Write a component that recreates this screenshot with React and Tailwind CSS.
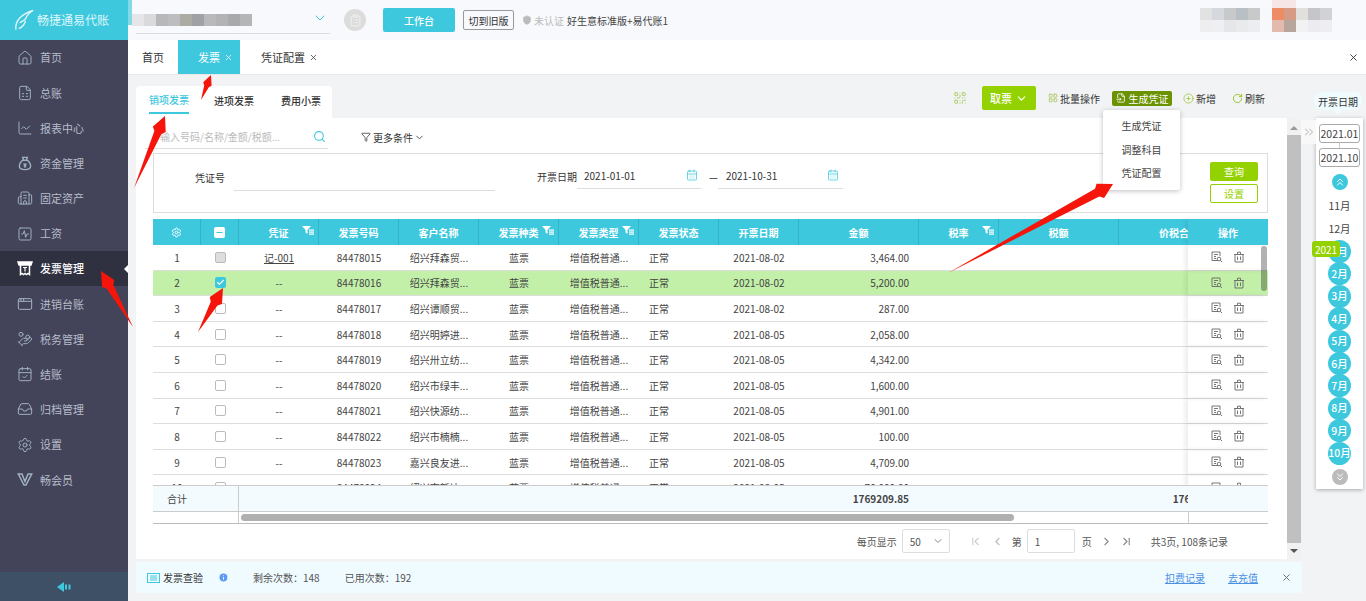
import React from "react";
import {
  House, FileSpreadsheet, ChartLine, Building2, SquareActivity, AppWindow, HandCoins, CalendarCheck,
  Inbox, Settings, ChevronDown, ChevronLeft, ChevronRight, ChevronsUp, ChevronsDown, ChevronsRight,
  ChevronFirst, ChevronLast, X, Search, Funnel, CalendarDays, QrCode, LayoutGrid, CirclePlus, RotateCw,
  Shield, Check, Minus, ClipboardList, FileInput, Info,
} from "lucide-react";

const MoneyBag = (props) => (
  <svg width="15" height="15" viewBox="0 0 16 16" fill="none" stroke="currentColor" strokeWidth="1.2" {...props}>
    <path d="M5.5 1.5h5L9.5 4.5h-3zM6 4.5C3.5 6 2 8.5 2 11c0 2.5 2 3.5 6 3.5s6-1 6-3.5c0-2.5-1.500-5-4-6.500"/>
    <path d="M6.500 8l1.500 1.500L9.500 8M8 9.500V12.500M6.500 10.500h3"/>
  </svg>
);

const InvoiceIcon = (props) => (
  <svg width="16" height="15" viewBox="0 0 16 15" fill="none" stroke="currentColor" strokeWidth="1.500" {...props}>
    <path d="M1 1h14l-1 3H2z" fill="currentColor"/>
    <path d="M3.500 4v9.500l1.500-1 1.500 1 1.500-1 1.500 1 1.500-1 1.500 1V4"/>
    <path d="M6 6.500h4M8 6.500v4" strokeWidth="1.200"/>
  </svg>
);

const VipIcon = (props) => (
  <svg width="15" height="13" viewBox="0 0 15 13" fill="none" stroke="currentColor" strokeWidth="1.300" {...props}>
    <path d="M0.800 1h3.700l3 7.500L10.500 1h3.700L8.500 12h-2z"/>
  </svg>
);

const navItems = [
  {label: "首页", icon: House},
  {label: "总账", icon: FileSpreadsheet},
  {label: "报表中心", icon: ChartLine},
  {label: "资金管理", icon: MoneyBag},
  {label: "固定资产", icon: Building2},
  {label: "工资", icon: SquareActivity},
  {label: "发票管理", icon: InvoiceIcon, active: true},
  {label: "进销台账", icon: AppWindow},
  {label: "税务管理", icon: HandCoins},
  {label: "结账", icon: CalendarCheck},
  {label: "归档管理", icon: Inbox},
  {label: "设置", icon: Settings},
  {label: "畅会员", icon: VipIcon},
];

const rows = [
  {no: 1, voucher: "记-001", code: "84478015", name: "绍兴拜森贸...", date: "2021-08-02", amount: "3,464.00"},
  {no: 2, voucher: "--", code: "84478016", name: "绍兴拜森贸...", date: "2021-08-02", amount: "5,200.00", checked: true},
  {no: 3, voucher: "--", code: "84478017", name: "绍兴谭顺贸...", date: "2021-08-02", amount: "287.00"},
  {no: 4, voucher: "--", code: "84478018", name: "绍兴明婷进...", date: "2021-08-05", amount: "2,058.00"},
  {no: 5, voucher: "--", code: "84478019", name: "绍兴卅立纺...", date: "2021-08-05", amount: "4,342.00"},
  {no: 6, voucher: "--", code: "84478020", name: "绍兴市绿丰...", date: "2021-08-05", amount: "1,600.00"},
  {no: 7, voucher: "--", code: "84478021", name: "绍兴快源纺...", date: "2021-08-05", amount: "4,901.00"},
  {no: 8, voucher: "--", code: "84478022", name: "绍兴市楠楠...", date: "2021-08-05", amount: "100.00"},
  {no: 9, voucher: "--", code: "84478023", name: "嘉兴良友进...", date: "2021-08-05", amount: "4,709.00"},
  {no: 10, voucher: "--", code: "84478024", name: "绍兴市新达...", date: "2021-08-05", amount: "70,000.00"},
];

const months = ["1月", "2月", "3月", "4月", "5月", "6月", "7月", "8月", "9月", "10月"];

const gridCols = "grid grid-cols-[48px_38px_80px_80px_80px_80px_80px_80px_80px_120px_80px_120px_69px_80px]";

const arrows = [
  [201, 100, 211, 75, 4.5],
  [134, 188, 165, 116, 7],
  [133, 327, 101, 271, 7],
  [198, 332, 223, 288, 7],
  [948, 273, 1113, 184, 8],
];

// mosaic over the private names in the screenshot
const companyTiles = ["#e6e6e8", "#dadadc", "#b8b8ba", "#bdbcbe", "#acaca5", "#9fa1a4", "#b9b9bc", "#b2b3b2", "#a8a9ab", "#b4b5b6"];
const userTilesTop = ["#e2e2e2", "#d5d8dc", "#c8c9cb", "#b8bfc5", "#c8caca", "#f7f8fc", "#ec8d66", "#d69b85", "#e2e0dc", "#c5c5ca", "#d0d2d6"];
const userTilesBottom = ["#eeeef0", "#eeeff3", "#e6e6e8", "#e8eaec", "#ecedf1", "#f7f8fc", "#e2baae", "#b8a69e", "#f2f2f2", "#ecebf0", "#eeeef0"];

const arrowPoints = ([x1, y1, x2, y2, w]) => {
  const len = Math.hypot(x2 - x1, y2 - y1);
  const ux = (x2 - x1) / len;
  const uy = (y2 - y1) / len;
  const head = Math.min(18, len * 0.45);
  const bx = x2 - ux * head;
  const by = y2 - uy * head;
  const nx = x2 - ux * head * 0.8;
  const ny = y2 - uy * head * 0.8;
  return [
    [x1, y1],
    [bx - uy * w * 0.55, by + ux * w * 0.55],
    [nx - uy * w, ny + ux * w],
    [x2, y2],
    [nx + uy * w, ny - ux * w],
    [bx + uy * w * 0.55, by - ux * w * 0.55],
  ].map((p) => p.join(",")).join(" ");
};

const FilterMark = () => (
  <svg width="12" height="10" viewBox="0 0 12 10" fill="white" className="absolute right-[4px] top-[7px]">
    <path d="M0 0h9L5.500 4v4L3.500 6.500V4z"/>
    <rect x="7" y="3.500" width="5" height="1.200"/>
    <rect x="7" y="5.500" width="5" height="1.200"/>
    <rect x="7" y="7.500" width="5" height="1.200"/>
  </svg>
);

const ViewIcon = () => (
  <svg width="12" height="12" viewBox="0 0 12 12" fill="none" stroke="currentColor" strokeWidth="0.900">
    <path d="M7 9.500H1V1h8v4"/>
    <path d="M3 3.500h4M3 5.500h2M3 7.500h2"/>
    <circle cx="8" cy="8" r="1.800"/>
    <path d="M9.300 9.300L11 11"/>
  </svg>
);

const BinIcon = () => (
  <svg width="12" height="12" viewBox="0 0 12 12" fill="none" stroke="currentColor" strokeWidth="0.900">
    <path d="M1 3.500h10M4.500 3.500V1.200h3v2.300M2 3.500V11h8V3.500M4.500 5.500v3.500M7.500 5.500v3.500"/>
  </svg>
);

const HeaderCell = ({children, filter}) => (
  <div className="relative flex h-full items-center justify-center border-r border-[#35b3c8] font-bold">
    {children}
    {filter && <FilterMark/>}
  </div>
);

const Sidebar = () => (
  <aside className="flex h-full w-[128px] shrink-0 flex-col bg-[#43435a]">
    <div className="relative flex h-[40px] shrink-0 items-center gap-[2px] bg-[#3ec8de] pl-[14px] text-[12px] text-[#dff6fa]">
      <svg width="21" height="24" viewBox="0 0 22 24" fill="none" stroke="#e8f8fb" strokeWidth="1.400">
        <path d="M2 22C1 13 8 6 20 2C15 5 13 8 12 11C10 13 7 14 6 15"/>
        <path d="M5 21C8 20 11 17 12 13"/>
      </svg>
      <span className="whitespace-nowrap">畅捷通易代账</span>
      <div className="absolute -right-[4px] top-0 h-[25px] w-[4px] bg-[#84d9e7]"/>
    </div>
    <nav className="flex-1">
      {navItems.map((item) => (
        <div
          key={item.label}
          className={
            item.active
              ? "relative flex h-[35.2px] items-center gap-[7px] bg-[#2f3040] pl-[17px] text-[11px] font-medium text-white"
              : "flex h-[35.2px] items-center gap-[7px] pl-[17px] text-[11px] text-[#b6bdc9]"
          }
        >
          <item.icon size={16} strokeWidth={1.5} className={item.active ? "w-[16px] text-white" : "w-[16px] text-[#9fb2c0]"}/>
          <span>{item.label}</span>
          {item.active && (
            <span className="absolute right-0 top-[14px] h-0 w-0 border-y-[4px] border-r-[4px] border-y-transparent border-r-white"/>
          )}
        </div>
      ))}
    </nav>
    <div className="flex h-[29px] shrink-0 items-center justify-center bg-[#3e5066]">
      <svg width="14" height="10" viewBox="0 0 14 10" fill="#3ec8de">
        <path d="M0 5L7 0V10Z"/>
        <rect x="8" y="2.500" width="2" height="5"/>
        <rect x="11.500" y="2.500" width="2" height="5"/>
      </svg>
    </div>
  </aside>
);

const TopBar = () => (
  <header className="flex h-[40px] shrink-0 items-center bg-[#f8f9fd] text-[10px]">
    <div className="relative flex h-full w-[202px] shrink-0 items-center pl-[4px]">
      <div className="flex">
        {companyTiles.map((c, i) => (
          <div key={i} className="h-[12px] w-[12px]" style={{backgroundColor: c}}/>
        ))}
      </div>
      <ChevronDown size={16} strokeWidth={1.5} className="absolute left-[184px] top-[10px] text-[#3ec8de]"/>
      <div className="absolute bottom-[6px] left-[8px] h-px w-[194px] bg-[#dddddd]"/>
    </div>
    <div className="ml-[14px] flex h-[22px] w-[22px] items-center justify-center rounded-full bg-[#dcdcdc]">
      <ClipboardList size={13} strokeWidth={1.5} className="text-[#f5f5f5]"/>
    </div>
    <button className="ml-[17px] h-[24px] w-[72px] rounded-[2px] bg-[#3ec8de] text-[10px] font-medium text-white">工作台</button>
    <button className="ml-[8px] h-[20px] w-[51px] rounded-[2px] border border-[#999] text-[10px] text-[#333]">切到旧版</button>
    <Shield size={10} fill="#bbbbbb" className="ml-[8px] text-[#bbbbbb]"/>
    <span className="ml-[2px] text-[#bbbbbb]">未认证</span>
    <span className="ml-[3px] text-[#444]">好生意标准版+易代账1</span>
    <div className="relative ml-auto mr-[34px] flex w-[132px] flex-col">
      {[userTilesTop, userTilesBottom].map((line, n) => (
        <div key={n} className="flex">
          {line.map((c, i) => (
            <div key={i} className="h-[12px] w-[12px]" style={{backgroundColor: c}}/>
          ))}
        </div>
      ))}
      <div className="absolute -top-[12px] left-[72px] h-[12px] w-[24px] bg-[#f7e6e6]"/>
    </div>
  </header>
);

const TabBar = () => (
  <div className="flex h-[35px] shrink-0 items-stretch border-b border-[#e8e8e8] bg-white text-[11px] text-[#333]">
    <div className="flex w-[50px] items-center pl-[14px]">首页</div>
    <div className="flex w-[62px] items-center gap-[4px] bg-[#3ec8de] pl-[20px] text-white">
      发票 <X size={9}/>
    </div>
    <div className="flex items-center gap-[4px] pl-[21px]">
      凭证配置 <X size={9}/>
    </div>
    <div className="ml-auto flex w-[26px] items-center justify-center">
      <X size={11} className="text-[#333]"/>
    </div>
  </div>
);

const Toolbar = () => (
  <div className="flex h-[32px] shrink-0 items-start">
    <div className="flex h-full w-[196px] items-stretch rounded-t-[4px] bg-white pl-[13px] text-[10px] font-medium whitespace-nowrap text-[#333]">
      <div className="mr-[25px] flex h-[28px] w-[40px] items-center justify-center border-b-2 border-[#3ec8de] text-[#3ec8de]">销项发票</div>
      <div className="mr-[27px] flex h-[28px] items-center">进项发票</div>
      <div className="flex h-[28px] items-center">费用小票</div>
    </div>
    <div className="ml-auto mr-[101px] flex h-[24px] items-center text-[10px] whitespace-nowrap text-[#333]">
      <QrCode size={14} strokeWidth={1.5} className="text-[#a6c85a]"/>
      <button className="ml-[15px] flex h-[24px] w-[54px] items-center justify-center gap-[3px] rounded-[2px] bg-[#94d100] text-[11px] font-medium text-white">
        取票 <ChevronDown size={13}/>
      </button>
      <LayoutGrid size={10} className="ml-[12px] text-[#a6c85a]"/>
      <span className="ml-[2px]">批量操作</span>
      <div className="ml-[12px] flex h-[15px] w-[60px] items-center justify-center gap-[3px] rounded-[2px] bg-[#6b9200] text-white">
        <FileInput size={10}/> 生成凭证
      </div>
      <CirclePlus size={11} strokeWidth={1.5} className="ml-[11px] text-[#94c21e]"/>
      <span className="ml-[2px]">新增</span>
      <RotateCw size={11} className="ml-[16px] text-[#94c21e]"/>
      <span className="ml-[2px]">刷新</span>
    </div>
  </div>
);

const SearchRow = () => (
  <div className="mt-[7px] -ml-[8px] flex h-[24px] items-center">
    <div className="flex h-[24px] w-[183px] items-center justify-between border-b border-[#dddddd] pl-[15px] pr-[2px] text-[10px] text-[#bbbbbb]">
      <span className="whitespace-nowrap">输入号码/名称/金额/税额...</span>
      <Search size={13} className="text-[#3ec8de]"/>
    </div>
    <Funnel size={10} className="ml-[33px] text-[#444]"/>
    <span className="ml-[2px] text-[10px] text-[#333]">更多条件</span>
    <ChevronDown size={11} className="ml-[1px] text-[#444]"/>
  </div>
);

const FilterBox = () => (
  <div className="mt-[4px] flex h-[60px] items-start border border-[#dddddd] text-[10px] text-[#333]">
    <span className="ml-[41px] mt-[16px]">凭证号</span>
    <div className="ml-[9px] mt-[36px] h-px w-[261px] bg-[#dddddd]"/>
    <span className="ml-[42px] mt-[15px]">开票日期</span>
    <div className="mt-[8px] flex h-[27px] w-[124px] items-center justify-between border-b border-[#dddddd] pl-[7px] pr-[3px]">
      2021-01-01
      <CalendarDays size={12} strokeWidth={1.5} className="text-[#3ec8de]"/>
    </div>
    <span className="ml-[8px] mt-[15px]">—</span>
    <div className="mt-[8px] flex h-[27px] w-[125px] items-center justify-between border-b border-[#dddddd] pl-[8px] pr-[4px]">
      2021-10-31
      <CalendarDays size={12} strokeWidth={1.5} className="text-[#3ec8de]"/>
    </div>
    <div className="ml-auto mr-[9px] mt-[8px] flex w-[48px] flex-col gap-[3px]">
      <button className="h-[19px] rounded-[2px] bg-[#94d100] text-white">查询</button>
      <button className="h-[19px] rounded-[2px] border border-[#94d100] text-[#94d100]">设置</button>
    </div>
  </div>
);

const InvoiceTable = () => (
  <div className="relative mt-[6px] text-[10px] text-[#444]">
    <div className={`${gridCols} h-[26px] bg-[#3ec8de] text-[10px] text-white`}>
      <HeaderCell><Settings size={11}/></HeaderCell>
      <HeaderCell>
        <span className="flex h-[11px] w-[11px] items-center justify-center rounded-[2px] bg-white">
          <Minus size={9} strokeWidth={3} className="text-[#3ec8de]"/>
        </span>
      </HeaderCell>
      <HeaderCell filter>凭证</HeaderCell>
      <HeaderCell>发票号码</HeaderCell>
      <HeaderCell>客户名称</HeaderCell>
      <HeaderCell filter>发票种类</HeaderCell>
      <HeaderCell filter>发票类型</HeaderCell>
      <HeaderCell>发票状态</HeaderCell>
      <HeaderCell>开票日期</HeaderCell>
      <HeaderCell>金额</HeaderCell>
      <HeaderCell filter>税率</HeaderCell>
      <HeaderCell>税额</HeaderCell>
      <div className="flex h-full items-center overflow-hidden font-bold">
        <span className="w-[120px] shrink-0 text-center">价税合计</span>
      </div>
      <div className="flex h-full items-center justify-center font-bold shadow-[-3px_0_5px_rgba(0,0,0,0.08)]">操作</div>
    </div>

    <div className="h-[240px] overflow-hidden">
      {rows.map((row) => (
        <div
          key={row.no}
          className={`${gridCols} h-[25.6px] items-center border-b border-[#dddddd] ${row.checked ? "bg-[#c2f0a8]" : "bg-white"}`}
        >
          <div className="text-center">{row.no}</div>
          <div className="flex justify-center">
            {row.checked ? (
              <span className="flex h-[11px] w-[11px] items-center justify-center rounded-[2px] bg-[#3ec8de]">
                <Check size={9} strokeWidth={3} className="text-white"/>
              </span>
            ) : (
              <span className={`h-[11px] w-[11px] rounded-[2px] border border-[#bbbbbb] ${row.no === 1 ? "bg-[#dddddd]" : "bg-white"}`}/>
            )}
          </div>
          <div className={`text-center ${row.no === 1 ? "underline" : ""}`}>{row.voucher}</div>
          <div className="text-center">{row.code}</div>
          <div className="text-center">{row.name}</div>
          <div className="text-center">蓝票</div>
          <div className="text-center">增值税普通...</div>
          <div className="pl-[10px]">正常</div>
          <div className="text-center">{row.date}</div>
          <div className="pr-[10px] text-right">{row.amount}</div>
          <div/>
          <div/>
          <div/>
          <div className="flex h-full items-center justify-center gap-[10px] text-[#666] shadow-[-3px_0_5px_rgba(0,0,0,0.08)]">
            <ViewIcon/>
            <BinIcon/>
          </div>
        </div>
      ))}
    </div>

    <div className={`${gridCols} h-[27px] items-center border-y border-[#cccccc] bg-[#f3fbff] font-bold`}>
      <div className="col-span-2 flex h-full items-center justify-center border-r border-[#cccccc] pr-[37px] font-normal">合计</div>
      <div className="col-span-7"/>
      <div className="pr-[10px] text-right">1769209.85</div>
      <div/>
      <div/>
      <div className="overflow-hidden">
        <div className="w-[120px] pr-[10px] text-right">1769209.85</div>
      </div>
      <div/>
    </div>
    <div className="flex h-[12px] items-center border-b border-[#bbbbbb]">
      <div className="h-full w-[86px] border-r border-[#cccccc]"/>
      <div className="w-[949px] pl-[2px]"><div className="h-[7px] w-[773px] rounded-full bg-[#b0b0b0]"/></div>
      <div className="ml-auto h-full w-[80px] border-l border-[#cccccc]"/>
    </div>
    <div className="absolute right-[1px] top-[27px] h-[45px] w-[6px] rounded-full bg-black/30"/>
  </div>
);

const Pagination = () => (
  <div className="mt-[5px] flex h-[24px] items-center justify-end pr-[40px] text-[10px] text-[#555]">
    <span>每页显示</span>
    <div className="ml-[5px] flex h-[24px] w-[48px] items-center justify-between rounded-[2px] border border-[#dddddd] pl-[7px] pr-[5px]">
      50 <ChevronDown size={12} className="text-[#888]"/>
    </div>
    <ChevronFirst size={13} className="ml-[19px] text-[#ccc]"/>
    <ChevronLeft size={13} className="ml-[9px] text-[#bbb]"/>
    <span className="ml-[8px]">第</span>
    <div className="ml-[5px] flex h-[24px] w-[48px] items-center rounded-[2px] border border-[#dddddd] pl-[7px]">1</div>
    <span className="ml-[7px]">页</span>
    <ChevronRight size={13} className="ml-[8px] text-[#888]"/>
    <ChevronLast size={13} className="ml-[7px] text-[#888]"/>
    <span className="ml-[18px]">共3页, 108条记录</span>
  </div>
);

const MonthPanel = () => (
  <div className="relative ml-[15px] flex w-[47px] shrink-0 flex-col items-center bg-white pb-[4px] pt-[6px] text-[10.5px] text-[#444] shadow-[0_1px_4px_rgba(0,0,0,0.3)]">
    <div className="flex h-[19px] w-[41px] items-center justify-center rounded-[3px] border border-[#aaaaaa]">2021.01</div>
    <div className="h-[5px] w-px bg-[#cccccc]"/>
    <div className="flex h-[19px] w-[41px] items-center justify-center rounded-[3px] border border-[#aaaaaa]">2021.10</div>
    <div className="mt-[7px] flex h-[16px] w-[16px] items-center justify-center rounded-full bg-[#3ec8de]">
      <ChevronsUp size={12} className="text-white"/>
    </div>
    <div className="mt-[5px] flex h-[22.5px] items-center">11月</div>
    <div className="flex h-[22.5px] items-center">12月</div>
    <div className="relative flex flex-col items-center">
      {months.map((m) => (
        <div key={m} className="mb-[-0.6px] flex h-[23px] w-[23px] items-center justify-center rounded-full bg-[#3ec8de] font-medium whitespace-nowrap text-white">{m}</div>
      ))}
      <div className="absolute -left-[16px] top-[1px] flex h-[16px] w-[28px] items-center justify-center rounded-[3px] bg-[#94d100] text-[10px] text-white">2021</div>
    </div>
    <div className="mt-[5px] flex h-[16px] w-[16px] items-center justify-center rounded-full bg-[#bbbbbb]">
      <ChevronsDown size={12} className="text-white"/>
    </div>
    <div className="absolute -left-[15px] top-[2px] flex h-[24px] w-[15px] items-center justify-center bg-[#f8f8f8]">
      <ChevronsRight size={14} className="text-[#cccccc]"/>
    </div>
    <div className="absolute -left-[2px] -top-[26px] flex h-[18px] w-[48px] items-center justify-center rounded-[8px] bg-[#effbff] text-[10px] text-[#333]">
      开票日期
      <span className="absolute -bottom-[3px] left-[21px] h-[6px] w-[6px] rotate-45 bg-[#effbff]"/>
    </div>
  </div>
);

const NoticeBar = () => (
  <div className="mt-[3px] flex h-[31px] w-[1166px] shrink-0 items-center bg-[#f0fbff] pl-[11px] text-[10px] text-[#555]">
    <svg width="13" height="10" viewBox="0 0 13 10" fill="none" stroke="#3ec8de" strokeWidth="1">
      <rect x="0.500" y="0.500" width="12" height="9"/>
      <path d="M3 3h7M3 5h7M3 7h7"/>
    </svg>
    <span className="ml-[3px] text-[#333]">发票查验</span>
    <Info size={11} fill="#5b9df5" className="ml-[15px] text-white"/>
    <span className="ml-[24px]">剩余次数：148</span>
    <span className="ml-[25px]">已用次数：192</span>
    <span className="ml-auto text-[#4a90e2] underline">扣费记录</span>
    <span className="ml-[23px] text-[#4a90e2] underline">去充值</span>
    <X size={11} className="ml-[23px] mr-[10px] text-[#666]"/>
  </div>
);

const App = () => (
  <div
    className="relative flex h-[601px] w-[1366px] overflow-hidden bg-[#f2f3f5]"
    style={{fontFamily: '"Noto Sans CJK SC", "Noto Sans", sans-serif'}}
  >
    <Sidebar/>
    <main className="flex min-w-0 flex-1 flex-col">
      <TopBar/>
      <TabBar/>
      <div className="flex flex-1 flex-col pl-[8px] pt-[11px]">
        <Toolbar/>
        <div className="flex h-[441px] shrink-0 items-start">
          <section className="flex h-[441px] w-[1165px] shrink-0 bg-white">
            <div className="flex min-w-0 flex-1 flex-col pl-[17px] pr-[19px]">
              <SearchRow/>
              <FilterBox/>
              <InvoiceTable/>
              <Pagination/>
            </div>
            <div className="flex w-[14px] shrink-0 flex-col items-center bg-[#f1f1f1] pt-[8px]">
              <span className="h-0 w-0 border-x-[4px] border-b-[4px] border-x-transparent border-b-[#999]"/>
              <div className="mt-[5px] h-[408px] w-full bg-[#c0c0c0]"/>
              <span className="mt-[6px] h-0 w-0 border-x-[4px] border-t-[4px] border-x-transparent border-t-[#555]"/>
            </div>
          </section>
          <MonthPanel/>
        </div>
        <NoticeBar/>
      </div>
    </main>

    <div className="absolute left-[1103px] top-[110px] flex h-[80px] w-[77px] flex-col items-center justify-center gap-[6px] rounded-[2px] bg-white pb-[1px] text-[10px] text-[#444] shadow-[0_1px_5px_rgba(0,0,0,0.25)]">
      <span className="leading-[17.5px]">生成凭证</span>
      <span className="leading-[17.5px]">调整科目</span>
      <span className="leading-[17.5px]">凭证配置</span>
    </div>

    <svg className="pointer-events-none absolute left-0 top-0" width="1366" height="601">
      {arrows.map((a) => (
        <polygon key={a[0]} points={arrowPoints(a)} fill="#f5150a"/>
      ))}
    </svg>
  </div>
);

export default App;
